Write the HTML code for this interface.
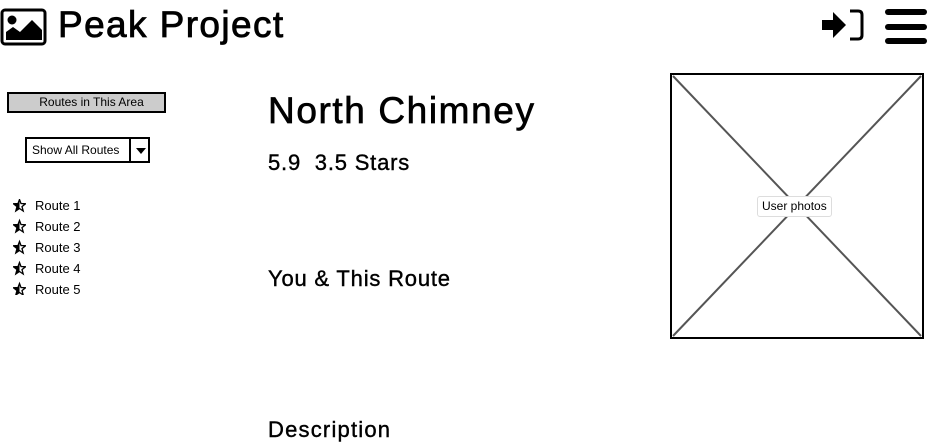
<!DOCTYPE html>
<html><head><style>
body{margin:0;width:931px;height:446px;background:#fff;position:relative;overflow:hidden;font-family:"Liberation Sans",sans-serif;color:#000}
.a{position:absolute}
.h{font-family:"Liberation Sans",sans-serif;-webkit-text-stroke:0.4px #000}
.r{font-size:13px;left:35px}
</style></head><body>
<svg class="a" style="left:0;top:8px" width="48" height="38" viewBox="0 0 48 38">
<rect x="2" y="2" width="43" height="34" rx="3" fill="none" stroke="#000" stroke-width="3"/>
<circle cx="12" cy="12" r="4.5" fill="#000"/>
<path d="M6 32 L6 24 L13 19 L20 24 L32 12 L42 22 L42 32 Z" fill="#000"/>
</svg>
<div class="a h" style="left:58px;top:4px;font-size:37px;letter-spacing:1.4px;-webkit-text-stroke:0.8px #000">Peak Project</div>
<svg class="a" style="left:821px;top:8px" width="44" height="34" viewBox="0 0 44 34">
<path d="M1 12 H12 V4 L25 17 L12 30 V22 H1 Z" fill="#000"/>
<path d="M29 3 H37 Q41 3 41 7 V27 Q41 31 37 31 H29" fill="none" stroke="#000" stroke-width="3"/>
</svg>
<div class="a" style="left:885px;top:9px;width:42px;height:6px;background:#000;border-radius:3px"></div>
<div class="a" style="left:885px;top:24px;width:42px;height:6px;background:#000;border-radius:3px"></div>
<div class="a" style="left:885px;top:38px;width:42px;height:6px;background:#000;border-radius:3px"></div>

<div class="a" style="left:7px;top:92px;width:155px;height:17px;background:#ccc;border:2px solid #000;font-size:12px;text-align:center;line-height:17px;box-sizing:content-box"><span style="padding-left:10px">Routes in This Area</span></div>
<div class="a" style="left:25px;top:137px;width:121px;height:22px;border:2px solid #000;font-size:12px;line-height:22px">
<span style="padding-left:5px">Show All Routes</span>
<div class="a" style="left:102px;top:0;width:2px;height:22px;background:#000"></div>
<div class="a" style="left:109px;top:9px;border-left:5px solid transparent;border-right:5px solid transparent;border-top:6px solid #000;width:0;height:0"></div>
</div>
<div class="a r" style="top:198px">Route 1</div>
<div class="a r" style="top:219px">Route 2</div>
<div class="a r" style="top:240px">Route 3</div>
<div class="a r" style="top:261px">Route 4</div>
<div class="a r" style="top:282px">Route 5</div>
<svg class="a" style="left:13px;top:199px" width="13" height="96" viewBox="0 0 13 96">
<g><path d="M6.5 0.5 L8 4.5 L12.5 4.8 L9 7.6 L10.2 12 L6.5 9.5 L2.8 12 L4 7.6 L0.5 4.8 L5 4.5Z" fill="none" stroke="#000" stroke-width="1.3"/><path d="M6.5 0.5 L5 4.5 L0.5 4.8 L4 7.6 L2.8 12 L6.5 9.5Z"/></g>
<g transform="translate(0,21)"><path d="M6.5 0.5 L8 4.5 L12.5 4.8 L9 7.6 L10.2 12 L6.5 9.5 L2.8 12 L4 7.6 L0.5 4.8 L5 4.5Z" fill="none" stroke="#000" stroke-width="1.3"/><path d="M6.5 0.5 L5 4.5 L0.5 4.8 L4 7.6 L2.8 12 L6.5 9.5Z"/></g>
<g transform="translate(0,42)"><path d="M6.5 0.5 L8 4.5 L12.5 4.8 L9 7.6 L10.2 12 L6.5 9.5 L2.8 12 L4 7.6 L0.5 4.8 L5 4.5Z" fill="none" stroke="#000" stroke-width="1.3"/><path d="M6.5 0.5 L5 4.5 L0.5 4.8 L4 7.6 L2.8 12 L6.5 9.5Z"/></g>
<g transform="translate(0,63)"><path d="M6.5 0.5 L8 4.5 L12.5 4.8 L9 7.6 L10.2 12 L6.5 9.5 L2.8 12 L4 7.6 L0.5 4.8 L5 4.5Z" fill="none" stroke="#000" stroke-width="1.3"/><path d="M6.5 0.5 L5 4.5 L0.5 4.8 L4 7.6 L2.8 12 L6.5 9.5Z"/></g>
<g transform="translate(0,84)"><path d="M6.5 0.5 L8 4.5 L12.5 4.8 L9 7.6 L10.2 12 L6.5 9.5 L2.8 12 L4 7.6 L0.5 4.8 L5 4.5Z" fill="none" stroke="#000" stroke-width="1.3"/><path d="M6.5 0.5 L5 4.5 L0.5 4.8 L4 7.6 L2.8 12 L6.5 9.5Z"/></g>
</svg>

<div class="a h" style="left:268px;top:90px;font-size:37px;letter-spacing:1.6px;-webkit-text-stroke:0.7px #000">North Chimney</div>
<div class="a h" style="left:268px;top:150px;font-size:22px;letter-spacing:0.8px">5.9&nbsp; 3.5 Stars</div>
<div class="a h" style="left:268px;top:266px;font-size:22px;letter-spacing:0.8px">You &amp; This Route</div>
<div class="a h" style="left:268px;top:417px;font-size:22px;letter-spacing:1.2px">Description</div>

<svg class="a" style="left:670px;top:73px" width="254" height="266" viewBox="0 0 254 266">
<rect x="1" y="1" width="252" height="264" fill="#fff" stroke="#000" stroke-width="2"/>
<line x1="3" y1="3" x2="251" y2="263" stroke="#555" stroke-width="2"/>
<line x1="251" y1="3" x2="3" y2="263" stroke="#555" stroke-width="2"/>
</svg>
<div class="a" style="left:757px;top:196px;padding:1px 4px;background:#fff;border:1px solid #ddd;border-radius:3px;font-size:12px;line-height:17px">User photos</div>
</body></html>
